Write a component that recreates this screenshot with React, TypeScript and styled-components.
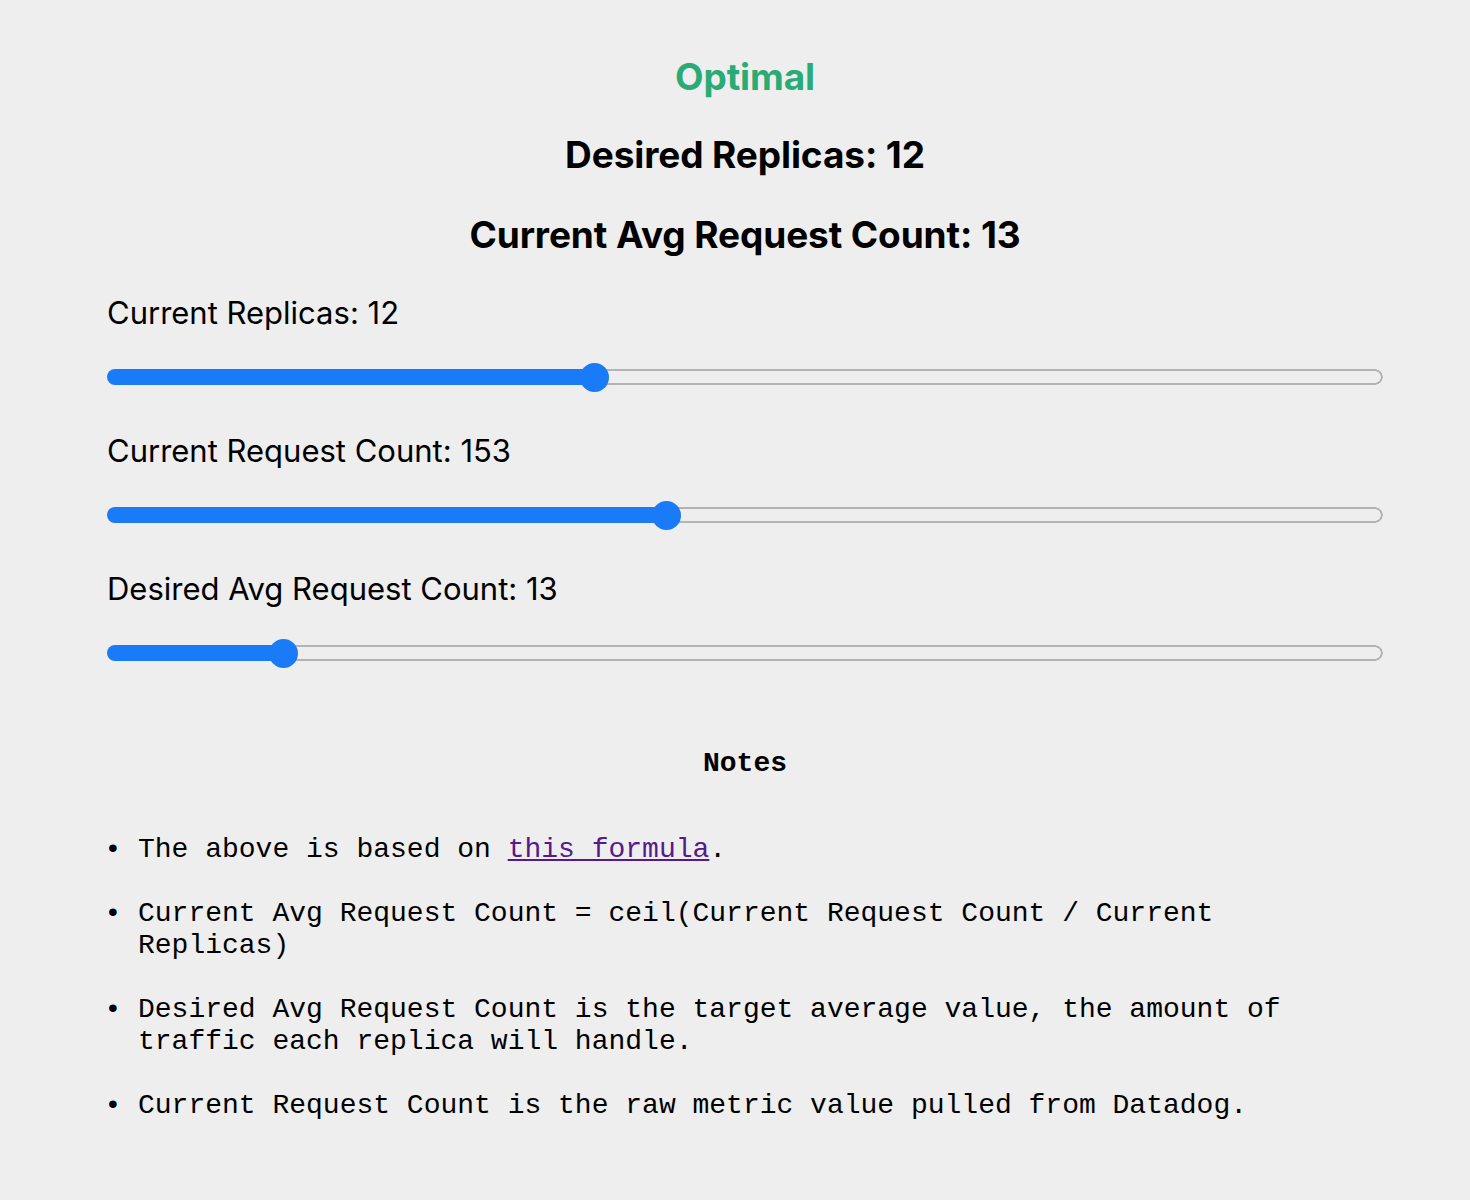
import React, { useState } from 'react'
import styled, { createGlobalStyle } from 'styled-components'

const GlobalStyle = createGlobalStyle`
  html, body { margin: 0; padding: 0; background: #eeeeee; }
  body { font-family: Inter, "Noto Sans", sans-serif; color: #000; }
`

const Page = styled.div`
  box-sizing: border-box;
  width: 1470px;
  min-height: 1200px;
  padding: 57px 87px 0 107px;
  display: flex;
  flex-direction: column;
`

const Heading = styled.h3<{ $color?: string; $gap?: number }>`
  margin: 0 0 ${(p) => p.$gap ?? 40}px;
  font-size: 37px;
  line-height: 40px;
  font-weight: 700;
  letter-spacing: -0.1px;
  text-align: center;
  color: ${(p) => p.$color || '#000'};
`

const Field = styled.div`
  display: flex;
  flex-direction: column;
  margin-bottom: 42px;
`

const Label = styled.label`
  font-size: 31px;
  line-height: 34px;
  margin-bottom: 32px;
`

const grey = '#b3b3b3'
const blue = '#197bf8'

const Range = styled.input`
  -webkit-appearance: none;
  appearance: none;
  display: block;
  width: 100%;
  height: 30px;
  margin: 0;
  background: transparent;
  outline: none;

  &::-webkit-slider-runnable-track {
    height: 16px;
    border: none;
    border-radius: 8px;
    background:
      linear-gradient(to right, ${blue} 0, ${blue} var(--fill), transparent var(--fill)),
      radial-gradient(circle at 0 50%, transparent 5.5px, ${grey} 6px, ${grey} 7.5px, transparent 8px) right center / 8px 16px no-repeat,
      linear-gradient(to bottom, ${grey} 0, ${grey} 2px, transparent 2px, transparent 14px, ${grey} 14px) left center / calc(100% - 8px) 16px no-repeat;
  }

  &::-webkit-slider-thumb {
    -webkit-appearance: none;
    width: 29px;
    height: 29px;
    margin-top: -6.5px;
    border-radius: 50%;
    background: ${blue};
    border: none;
  }
`

const NotesTitle = styled.h4`
  margin: 38px 0 54px;
  font-family: "Liberation Mono", "Courier New", monospace;
  font-size: 28px;
  line-height: 32px;
  font-weight: 700;
  text-align: center;
`

const NoteList = styled.ul`
  margin: 0;
  padding: 0 0 0 31px;
  width: 1200px;
  font-family: "Liberation Mono", "Courier New", monospace;
  font-size: 28px;
  line-height: 32px;
`

const NoteItem = styled.li`
  margin-bottom: 32px;

  &::marker {
    content: "• ";
  }
`

const Link = styled.a`
  color: #551a8b;
  text-decoration: underline;
`

type SliderProps = {
  label: string
  min: number
  max: number
  value: number
  onChange: (v: number) => void
}

function Slider({ label, min, max, value, onChange }: SliderProps) {
  const thumb = 29
  const width = 1276
  const frac = (value - min) / (max - min)
  const fill = thumb / 2 + frac * (width - thumb)
  return (
    <Field>
      <Label>
        {label}: {value}
      </Label>
      <Range
        type="range"
        min={min}
        max={max}
        value={value}
        onChange={(e) => onChange(Number(e.target.value))}
        style={{ ['--fill' as string]: `${fill}px` } as React.CSSProperties}
      />
    </Field>
  )
}

export default function App() {
  const [replicas, setReplicas] = useState(12)
  const [requests, setRequests] = useState(153)
  const [desiredAvg, setDesiredAvg] = useState(13)

  const currentAvg = Math.ceil(requests / replicas)
  const desired = Math.ceil(replicas * (currentAvg / desiredAvg))
  const status = desired > replicas ? 'Scale Up' : desired < replicas ? 'Scale Down' : 'Optimal'

  return (
    <>
      <GlobalStyle />
      <Page>
        <Heading $color="#29ab77" $gap={38}>{status}</Heading>
        <Heading>Desired Replicas: {desired}</Heading>
        <Heading $gap={41}>Current Avg Request Count: {currentAvg}</Heading>

        <Slider label="Current Replicas" min={1} max={30} value={replicas} onChange={setReplicas} />
        <Slider label="Current Request Count" min={0} max={350} value={requests} onChange={setRequests} />
        <Slider label="Desired Avg Request Count" min={0} max={100} value={desiredAvg} onChange={setDesiredAvg} />

        <NotesTitle>Notes</NotesTitle>
        <NoteList>
          <NoteItem>
            The above is based on <Link href="#">this formula</Link>.
          </NoteItem>
          <NoteItem>Current Avg Request Count = ceil(Current Request Count / Current Replicas)</NoteItem>
          <NoteItem>
            Desired Avg Request Count is the target average value, the amount of traffic each replica will handle.
          </NoteItem>
          <NoteItem>Current Request Count is the raw metric value pulled from Datadog.</NoteItem>
        </NoteList>
      </Page>
    </>
  )
}
